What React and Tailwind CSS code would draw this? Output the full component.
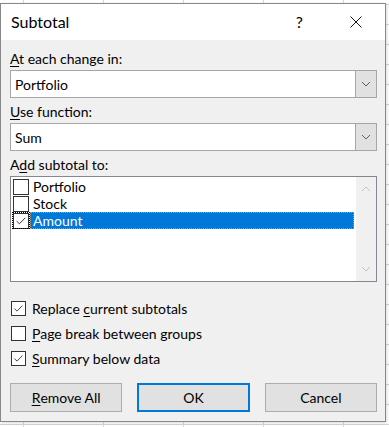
import React from 'react';

const font = { fontFamily: 'Lato, "Noto Sans", sans-serif' };

const Check = ({ className = '' }) => (
	<svg viewBox="0 0 16 16" className={className} aria-hidden="true">
		<path d="M3 8.2 L6.2 11.2 L12.8 4.4" fill="none" stroke="#333" strokeWidth="1.1" />
	</svg>
);

const Chevron = ({ up = false, color = '#606060' }) => (
	<svg width="10" height="6" viewBox="0 0 10 6" aria-hidden="true">
		<path d={up ? 'M1 5 L5 1 L9 5' : 'M1 1 L5 5 L9 1'} fill="none" stroke={color} strokeWidth="1" />
	</svg>
);

const U = ({ children }) => <span className="underline underline-offset-2 decoration-1">{children}</span>;

const Combo = ({ value }) => (
	<div className="flex h-[28px] border border-[#a6a6a6] bg-white">
		<div className="flex flex-1 items-center pl-[4px] text-[14px] leading-[17px] text-black">{value}</div>
		<div className="flex w-[21px] items-center justify-center border-l border-[#a6a6a6] bg-[#e1e1e1]">
			<Chevron />
		</div>
	</div>
);

const ListRow = ({ label, checked, selected }) => (
	<div className="flex h-[17px] items-center">
		<div
			className={`ml-[1px] flex h-[17px] w-[18px] items-center justify-center ${
				selected ? 'outline outline-1 outline-dotted outline-offset-[-1px] outline-black' : ''
			}`}
		>
			<div className="flex h-[16px] w-[16px] items-center justify-center border border-[#333] bg-white">
				{checked && <Check className="h-[14px] w-[14px]" />}
			</div>
		</div>
		<div
			className={`flex h-[17px] w-[324px] items-center pl-[3px] text-[14px] leading-[17px] ${
				selected ? 'bg-[#0078d7] text-white outline outline-1 outline-dotted outline-offset-[-1px] outline-[#f08a24]' : 'text-black'
			}`}
		>
			{label}
		</div>
	</div>
);

const Option = ({ checked, children }) => (
	<div className="flex h-[20px] items-center">
		<div className="ml-[1px] flex h-[15px] w-[15px] items-center justify-center border border-[#333] bg-white">
			{checked && <Check className="h-[13px] w-[13px]" />}
		</div>
		<div className="ml-[6px] text-[14px] leading-[17px] text-black">{children}</div>
	</div>
);

const Button = ({ children, primary }) => (
	<div
		className={`flex h-[29px] w-[113px] items-center justify-center bg-[#e1e1e1] text-[14px] text-black ${
			primary ? 'border-2 border-[#0078d7]' : 'border border-[#adadad]'
		}`}
	>
		{children}
	</div>
);

export default function App() {
	return (
		<div
			className="h-[427px] w-[389px] overflow-hidden bg-white bg-[linear-gradient(to_right,#d6d6d6_1px,transparent_1px),linear-gradient(to_bottom,#d6d6d6_1px,transparent_1px)] bg-[length:80px_20px] bg-[position:23px_4px] pt-[3px]"
			style={font}
		>
			<div className="flex h-[419px] w-[386px] flex-col border border-[#888888] bg-[#f0f0f0] shadow-[1px_1px_3px_rgba(0,0,0,0.15)]">
				<div className="flex h-[36px] items-center bg-white pl-[10px]">
					<div className="flex-1 text-[16px] text-black">Subtotal</div>
					<div className="mr-[47px] text-[16px] text-black">?</div>
					<svg width="12" height="12" viewBox="0 0 12 12" className="mr-[23px]" aria-hidden="true">
						<path d="M0.5 0.5 L11.5 11.5 M11.5 0.5 L0.5 11.5" stroke="#111" strokeWidth="1" />
					</svg>
				</div>

				<div className="flex flex-col pl-[9px] pr-[8px]">
					<div className="mt-[9px] h-[20px] text-[14px] leading-[20px] text-black">
						<U>A</U>t each change in:
					</div>
					<div className="mt-[1px]">
						<Combo value="Portfolio" />
					</div>

					<div className="mt-[4px] h-[20px] text-[14px] leading-[20px] text-black">
						<U>U</U>se function:
					</div>
					<div className="mt-[1px]">
						<Combo value="Sum" />
					</div>

					<div className="mt-[4px] h-[20px] text-[14px] leading-[20px] text-black">
						A<U>d</U>d subtotal to:
					</div>
					<div className="mt-[1px] flex h-[106px] border border-[#828790] bg-white">
						<div className="flex flex-1 flex-col pt-[1px]">
							<ListRow label="Portfolio" />
							<ListRow label="Stock" />
							<ListRow label="Amount" checked selected />
						</div>
						<div className="flex w-[20px] flex-col items-center justify-between bg-[#f0f0f0] py-[9px]">
							<Chevron up color="#c2c2c2" />
							<Chevron color="#c2c2c2" />
						</div>
					</div>

					<div className="mt-[16px] flex flex-col gap-[5px]">
						<Option checked>
							Replace <U>c</U>urrent subtotals
						</Option>
						<Option>
							<U>P</U>age break between groups
						</Option>
						<Option checked>
							<U>S</U>ummary below data
						</Option>
					</div>

					<div className="mt-[15px] flex gap-[15px]">
						<Button>
							<U>R</U>emove All
						</Button>
						<Button primary>OK</Button>
						<Button>Cancel</Button>
					</div>
				</div>
			</div>
		</div>
	);
}
